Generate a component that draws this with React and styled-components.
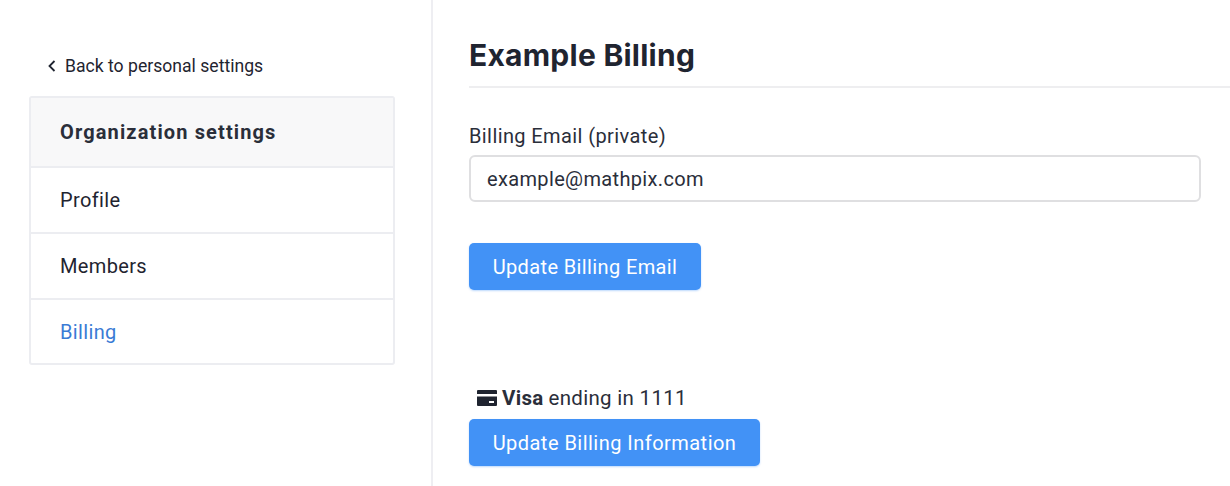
import React from 'react';
import styled, { createGlobalStyle } from 'styled-components';

const GlobalStyle = createGlobalStyle`
  html, body {
    margin: 0;
    padding: 0;
    background: #fff;
    overflow: hidden;
  }
  * {
    box-sizing: border-box;
  }
`;

const Page = styled.div`
  display: flex;
  width: 1230px;
  height: 486px;
  font-family: 'Roboto', 'Liberation Sans', sans-serif;
  color: #1f2430;
`;

const Sidebar = styled.aside`
  width: 433px;
  height: 100%;
  flex-shrink: 0;
  padding: 54px 38px 0 29px;
  border-right: 2px solid #eeeef2;
`;

const BackLink = styled.a`
  display: flex;
  align-items: center;
  gap: 8px;
  height: 24px;
  margin: 0 0 18px 18px;
  font-size: 17.6px;
  color: #1f2430;
`;

const Menu = styled.nav`
  display: flex;
  flex-direction: column;
  width: 366px;
  border: 2px solid #ecedf1;
  border-radius: 3px;
`;

const MenuHeader = styled.div`
  display: flex;
  align-items: center;
  height: 68px;
  padding-left: 29px;
  background: #f8f8f9;
  font-size: 20px;
  font-weight: 700;
  letter-spacing: 1.13px;
  color: #2a2e3a;
`;

const MenuItem = styled.a`
  display: flex;
  align-items: center;
  height: 66px;
  padding-left: 29px;
  border-top: 2px solid #ecedf1;
  font-size: 20px;
  letter-spacing: 0.35px;
  color: ${(p) => (p.$active ? '#3a7bd5' : '#1f2430')};

  &:last-child {
    height: 65px;
  }
`;

const Main = styled.main`
  flex: 1;
  padding: 33px 0 0 36px;
`;

const Heading = styled.h1`
  height: 55px;
  margin: 0 0 35px;
  border-bottom: 2px solid #eeeef0;
  font-family: 'Inter', sans-serif;
  font-size: 30px;
  font-weight: 700;
  line-height: 44px;
  letter-spacing: 0.25px;
  color: #1f2430;
`;

const Label = styled.label`
  display: block;
  height: 32px;
  font-size: 20px;
  line-height: 27px;
  letter-spacing: 0.4px;
  color: #2a2e3a;
`;

const Input = styled.input`
  display: block;
  width: 732px;
  height: 47px;
  margin-bottom: 41px;
  padding: 0 16px;
  border: 2px solid #dfdfe1;
  border-radius: 6px;
  outline: none;
  font-family: inherit;
  font-size: 20px;
  letter-spacing: 0.35px;
  color: #2a2e3a;
`;

const Button = styled.button`
  display: block;
  width: ${(p) => p.$width}px;
  height: 47px;
  padding: 0;
  border: none;
  border-radius: 5px;
  background: #4292f6;
  box-shadow: 0 1px 2px rgba(66, 146, 246, 0.35);
  font-family: inherit;
  font-size: 20px;
  letter-spacing: ${(p) => p.$spacing}px;
  color: #fff;
`;

const CardLine = styled.div`
  display: flex;
  align-items: center;
  gap: 5px;
  height: 24px;
  margin: 96px 0 9px 8px;
  font-size: 20.5px;
  letter-spacing: 0.3px;
  color: #2a2e3a;

  strong {
    margin-right: 5px;
    font-weight: 700;
  }
`;

const ChevronLeft = () => (
  <svg width="10" height="14" viewBox="0 0 10 14" fill="none" stroke="#1f2430" strokeWidth="1.8">
    <path d="M7.5 2 L2.5 7 L7.5 12" />
  </svg>
);

const CardIcon = () => (
  <svg width="20" height="16" viewBox="0 0 20 16">
    <path
      fill="#1f2430"
      d="M1 0h18a1 1 0 0 1 1 1v3H0V1a1 1 0 0 1 1-1zM0 6.5h20V15a1 1 0 0 1-1 1H1a1 1 0 0 1-1-1zm12 4.5v2h5v-2z"
    />
  </svg>
);

const App = () => {
  return (
    <Page>
      <GlobalStyle />
      <Sidebar>
        <BackLink>
          <ChevronLeft />
          Back to personal settings
        </BackLink>
        <Menu>
          <MenuHeader>Organization settings</MenuHeader>
          <MenuItem>Profile</MenuItem>
          <MenuItem>Members</MenuItem>
          <MenuItem $active>Billing</MenuItem>
        </Menu>
      </Sidebar>
      <Main>
        <Heading>Example Billing</Heading>
        <Label>Billing Email (private)</Label>
        <Input defaultValue="example@mathpix.com" />
        <Button $width={232} $spacing={0.38}>Update Billing Email</Button>
        <CardLine>
          <CardIcon />
          <span>
            <strong>Visa</strong>ending in 1111
          </span>
        </CardLine>
        <Button $width={291} $spacing={0.47}>Update Billing Information</Button>
      </Main>
    </Page>
  );
};

export default App;
